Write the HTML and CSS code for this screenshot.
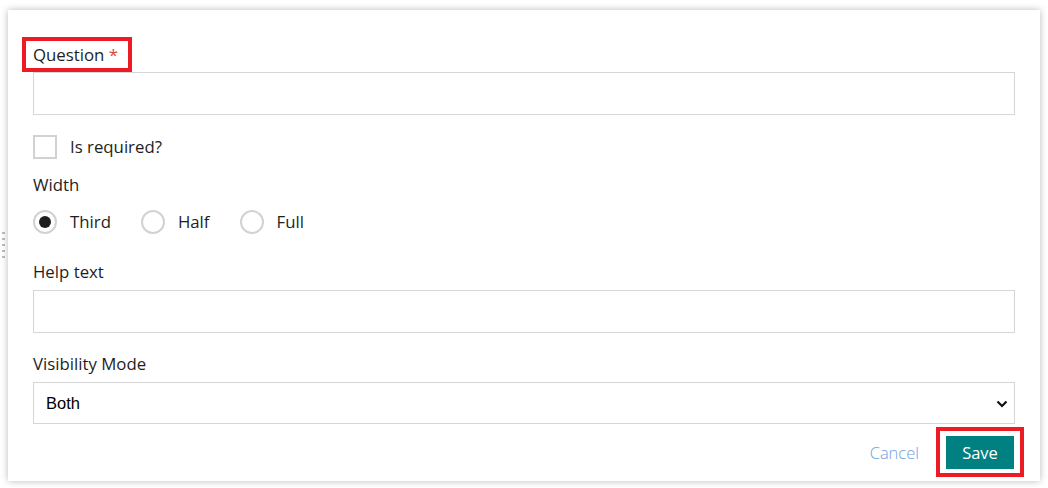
FILE: index.html
```html
<!DOCTYPE html>
<html lang="en">
<head>
<meta charset="utf-8">
<title>Question editor</title>
<link rel="stylesheet" href="styles.css">
</head>
<body>
<div class="handle"><i></i><i></i><i></i><i></i><i></i></div>
<form class="panel">
  <div class="field">
    <label class="label q-label">Question <span class="req">*</span></label>
    <div class="input"></div>
  </div>
  <div class="check-row">
    <span class="checkbox"></span>
    <span class="opt">Is required?</span>
  </div>
  <div class="label width-label">Width</div>
  <div class="radio-row">
    <span class="radio-item"><span class="radio on"></span><span class="opt">Third</span></span>
    <span class="radio-item"><span class="radio"></span><span class="opt">Half</span></span>
    <span class="radio-item"><span class="radio"></span><span class="opt">Full</span></span>
  </div>
  <div class="field help">
    <label class="label">Help text</label>
    <div class="input"></div>
  </div>
  <div class="field vis">
    <label class="label">Visibility Mode</label>
    <div class="select">
      <span>Both</span>
      <svg class="chev" width="12" height="8" viewBox="0 0 12 8"><path d="M1.5 1.5 L6 6 L10.5 1.5" fill="none" stroke="#111" stroke-width="2.2"/></svg>
    </div>
  </div>
  <div class="actions">
    <span class="cancel">Cancel</span>
    <span class="save-wrap"><span class="save">Save</span></span>
  </div>
  <span class="hl hl-question"></span>
</form>
</body>
</html>
```

FILE: styles.css
```css
html, body {
  margin: 0;
  padding: 0;
  background: #ffffff;
}
body {
  width: 1048px;
  height: 488px;
  position: relative;
  overflow: hidden;
  font-family: "Open Sans", "Noto Sans", sans-serif;
  color: #1e1e1e;
}
.handle {
  position: absolute;
  left: 2px;
  top: 232px;
  display: flex;
  flex-direction: column;
  gap: 4px;
}
.handle i {
  display: block;
  width: 3px;
  height: 2px;
  background: #b9bec4;
}
.panel {
  position: relative;
  margin: 10px 0 0 8px;
  width: 1032px;
  height: 471px;
  box-sizing: border-box;
  padding: 33px 25px 0 25px;
  background: #fff;
  box-shadow: 0 0 7px rgba(0, 0, 0, 0.28);
}
.label {
  display: block;
  font-size: 16.8px;
  line-height: 24px;
  color: #1e1e1e;
}
.req {
  color: #e0453a;
}
.field .label {
  margin-bottom: 5px;
}
.input {
  height: 43px;
  box-sizing: border-box;
  border: 1px solid #d6d6d6;
  background: #fff;
}
.check-row {
  display: flex;
  align-items: center;
  margin-top: 20px;
  height: 24px;
}
.checkbox {
  width: 24px;
  height: 24px;
  box-sizing: border-box;
  border: 2px solid #d2d2d2;
  margin-right: 13px;
}
.opt {
  font-size: 16.8px;
  line-height: 24px;
}
.width-label {
  margin-top: 14px;
}
.radio-row {
  display: flex;
  align-items: center;
  margin-top: 13px;
  height: 24px;
}
.radio-item {
  display: flex;
  align-items: center;
  margin-right: 30px;
}
.radio {
  width: 24px;
  height: 24px;
  box-sizing: border-box;
  border: 2px solid #d2d2d2;
  border-radius: 50%;
  margin-right: 13px;
  display: flex;
  align-items: center;
  justify-content: center;
}
.radio.on::after {
  content: "";
  width: 12px;
  height: 12px;
  border-radius: 50%;
  background: #1e1e1e;
}
.help {
  margin-top: 26px;
}
.help .label {
  margin-bottom: 6px;
}
.help .input {
  height: 43px;
}
.vis {
  margin-top: 19px;
}
.vis .label {
  margin-bottom: 6px;
}
.select {
  height: 42px;
  box-sizing: border-box;
  border: 1px solid #d6d6d6;
  display: flex;
  align-items: center;
  justify-content: space-between;
  padding: 1px 6px 0 12px;
  font-family: "Liberation Sans", Arial, sans-serif;
  font-size: 16.5px;
  color: #000;
}
.actions {
  display: flex;
  justify-content: flex-end;
  align-items: center;
  margin-top: 3px;
}
.cancel {
  color: #6fa0dc;
  font-size: 16.5px;
  font-weight: 300;
  margin-right: 17px;
}
.save-wrap {
  border: 4px solid #ed1c24;
  padding: 5px 6px 4px 6px;
  margin-right: -9px;
}
.save {
  display: flex;
  align-items: center;
  justify-content: center;
  width: 68px;
  height: 33px;
  background: #008080;
  color: #fff;
  font-size: 16.5px;
}
.hl {
  position: absolute;
  border: 4px solid #ed1c24;
  box-sizing: border-box;
  pointer-events: none;
}
.hl-question {
  left: 14px;
  top: 27px;
  width: 110px;
  height: 35px;
}
```
